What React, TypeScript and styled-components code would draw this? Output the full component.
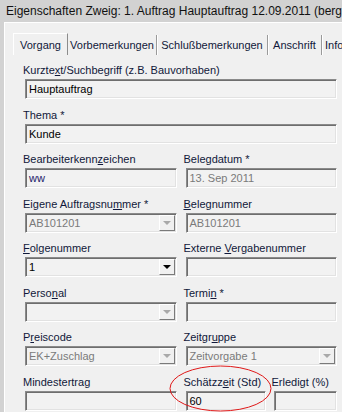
import styled, { createGlobalStyle } from 'styled-components'

const GlobalStyle = createGlobalStyle`
  html, body {
    margin: 0;
    padding: 0;
    background: #f0f0f0;
  }
  body {
    font-family: 'Liberation Sans', Arial, sans-serif;
  }
`

const Window = styled.div`
  position: relative;
  display: flex;
  flex-direction: column;
  width: 342px;
  height: 412px;
  overflow: hidden;
  background: #d2d2d2;
`

const TitleBar = styled.div`
  display: flex;
  flex: none;
  align-items: center;
  height: 22px;
  padding-left: 6px;
  font-size: 12px;
  color: #111;
  white-space: nowrap;
`

const Frame = styled.div`
  display: flex;
  flex: 1;
  flex-direction: column;
  margin-left: 4px;
  background: #f0f0f0;
  border-top: 1px solid #fff;
  border-left: 1px solid #fff;
`

const TabStrip = styled.div`
  display: flex;
  height: 22px;
  margin: 10px 0 0 8px;
  white-space: nowrap;
`

const Tab = styled.div<{ $w: number; $active?: boolean; $last?: boolean }>`
  display: flex;
  flex: none;
  align-items: center;
  justify-content: ${({ $last }) => ($last ? 'flex-start' : 'center')};
  width: ${({ $w }) => $w}px;
  padding-left: ${({ $last }) => ($last ? '3px' : '0')};
  font-size: 11px;
  color: #10183a;
  box-sizing: border-box;
  ${({ $active, $last }) =>
    $active
      ? `
    border-top: 1px solid #fff;
    border-left: 1px solid #fff;
    border-right: 1px solid #8c8c8c;
  `
      : `
    margin: 2px 0 0;
    border-right: ${$last ? 'none' : '1px solid #9a9a9a'};
    box-shadow: ${$last ? 'none' : '1px 0 0 #fff'};
  `}
`

const Page = styled.div`
  display: grid;
  grid-template-columns: 1fr 1fr;
  column-gap: 9px;
  row-gap: 8.5px;
  padding: 8px 5px 0 20px;
`

const Field = styled.div<{ $full?: boolean }>`
  display: flex;
  flex-direction: column;
  min-width: 0;
  grid-column: ${({ $full }) => ($full ? '1 / -1' : 'auto')};
`

const SplitCell = styled.div`
  display: grid;
  grid-template-columns: 80px 1fr;
  column-gap: 8px;
`

const Label = styled.div`
  height: 14px;
  margin: 0 0 2px -2px;
  font-size: 11px;
  line-height: 14px;
  color: #10183a;
  white-space: nowrap;
`

const Box = styled.div<{ $disabled?: boolean; $tone?: string }>`
  position: relative;
  display: flex;
  align-items: center;
  height: 20px;
  padding-left: 3px;
  box-sizing: border-box;
  font-size: 11px;
  color: ${({ $disabled, $tone }) => $tone ?? ($disabled ? '#7a7a7a' : '#000')};
  background: #f2f2f2;
  border-top: 1px solid #8a8a8a;
  border-left: 1px solid #8a8a8a;
  border-right: 1px solid #fff;
  border-bottom: 1px solid #fff;
  box-shadow:
    inset 1px 1px 0 #6e6e6e,
    inset -1px -1px 0 #e2e2e2;
  white-space: nowrap;
`

const ArrowButton = styled.div<{ $disabled?: boolean }>`
  position: absolute;
  top: 1px;
  right: 1px;
  bottom: 1px;
  display: flex;
  align-items: center;
  justify-content: center;
  width: 16px;
  box-sizing: border-box;
  background: #f0f0f0;
  border-top: 1px solid #fff;
  border-left: 1px solid #fff;
  border-right: 1px solid #7a7a7a;
  border-bottom: 1px solid #7a7a7a;

  &::after {
    content: '';
    border-left: 4px solid transparent;
    border-right: 4px solid transparent;
    border-top: 4px solid ${({ $disabled }) => ($disabled ? '#a8a8a8' : '#000')};
  }
`

const Marker = styled.svg`
  position: absolute;
  left: 169px;
  top: 365px;
`

type FieldProps = {
  label: React.ReactNode
  value?: string
  disabled?: boolean
  select?: boolean
  full?: boolean
  tone?: string
}

const FormField = ({ label, value, disabled, select, full, tone }: FieldProps) => (
  <Field $full={full}>
    <Label>{label}</Label>
    <Box $disabled={disabled} $tone={tone}>
      {value}
      {select && <ArrowButton $disabled={disabled} />}
    </Box>
  </Field>
)

const App = () => {
  return (
    <Window>
      <GlobalStyle />
      <TitleBar>Eigenschaften Zweig: 1. Auftrag Hauptauftrag 12.09.2011 (bergeblick)</TitleBar>
      <Frame>
        <TabStrip>
          <Tab $w={55} $active>
            Vorgang
          </Tab>
          <Tab $w={89}>Vorbemerkungen</Tab>
          <Tab $w={111}>Schlußbemerkungen</Tab>
          <Tab $w={54}>Anschrift</Tab>
          <Tab $w={40} $last>
            Info
          </Tab>
        </TabStrip>

        <Page>
          <FormField
            full
            label={
              <>
                Kurzte<u>x</u>t/Suchbegriff (z.B. Bauvorhaben)
              </>
            }
            value="Hauptauftrag"
          />
          <FormField full label="Thema *" value="Kunde" />
          <FormField
            label={
              <>
                Bearbeiterkenn<u>z</u>eichen
              </>
            }
            value="ww"
            tone="#1c1c6a"
          />
          <FormField label="Belegdatum *" value="13. Sep 2011" disabled />
          <FormField
            label={
              <>
                Eigene Auftragsnu<u>m</u>mer *
              </>
            }
            value="AB101201"
            disabled
            select
          />
          <FormField
            label={
              <>
                <u>B</u>elegnummer
              </>
            }
            value="AB101201"
            disabled
          />
          <FormField
            label={
              <>
                <u>F</u>olgenummer
              </>
            }
            value="1"
            select
          />
          <FormField
            label={
              <>
                Externe <u>V</u>ergabenummer
              </>
            }
          />
          <FormField
            label={
              <>
                Perso<u>n</u>al
              </>
            }
            disabled
            select
          />
          <FormField
            label={
              <>
                Termi<u>n</u> *
              </>
            }
          />
          <FormField
            label={
              <>
                P<u>r</u>eiscode
              </>
            }
            value="EK+Zuschlag"
            disabled
            select
          />
          <FormField
            label={
              <>
                Zeitgr<u>u</u>ppe
              </>
            }
            value="Zeitvorgabe 1"
            disabled
            select
          />
          <FormField label="Mindestertrag" />
          <SplitCell>
            <FormField
              label={
                <>
                  Schätzz<u>e</u>it (Std)
                </>
              }
              value="60"
            />
            <FormField label="Erledigt (%)" />
          </SplitCell>
        </Page>
      </Frame>

      <Marker width="104" height="48" viewBox="0 0 104 48">
        <ellipse cx="51.5" cy="23.5" rx="50.5" ry="22.5" fill="none" stroke="#e01818" strokeWidth="1" />
      </Marker>
    </Window>
  )
}

export default App
